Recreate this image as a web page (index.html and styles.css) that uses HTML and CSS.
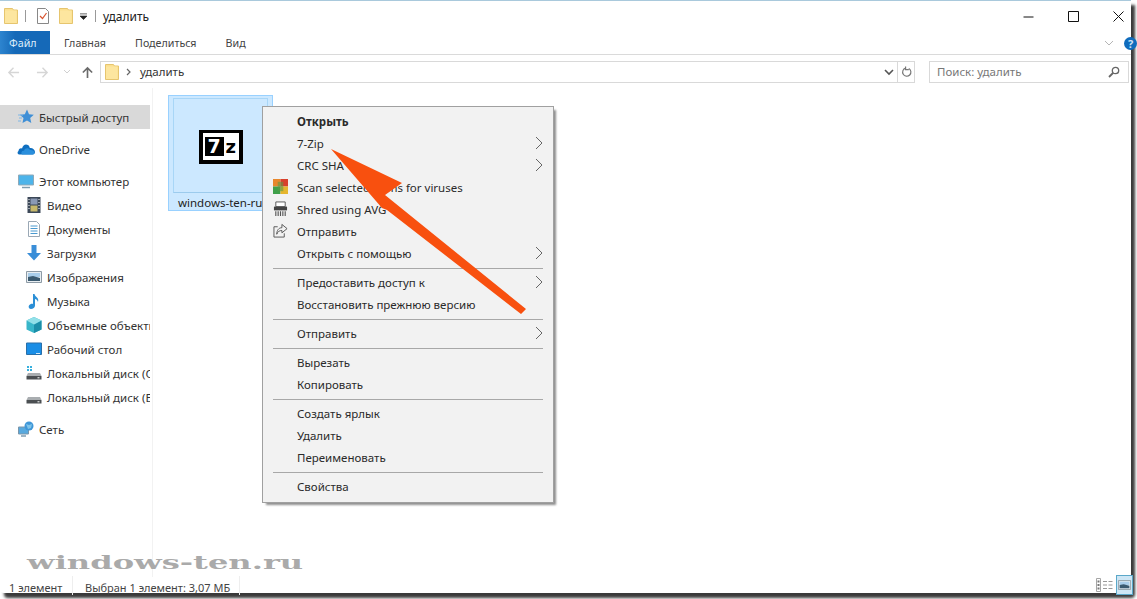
FILE: index.html
```html
<!DOCTYPE html>
<html lang="ru">
<head>
<meta charset="utf-8">
<title>удалить</title>
<link rel="stylesheet" href="styles.css">
</head>
<body>
<svg class="defs" width="0" height="0" aria-hidden="true">
  <symbol id="folder" viewBox="0 0 14 16">
    <path d="M0.5 0.5h8l1 1.500h4v13.500h-13z" fill="#fbdf8f" stroke="#e6c56e"/>
    <path d="M1 2.500h11.500v12.500H1z" fill="#fde69f"/>
  </symbol>
  <symbol id="chev" viewBox="0 0 8 14">
    <path d="M1 1l6 6-6 6" fill="none" stroke="#666" stroke-width="1"/>
  </symbol>
</svg>
<div class="window">
  <header class="titlebar">
    <svg class="ico-folder"><use href="#folder"/></svg>
    <i class="vsep"></i>
    <svg class="ico-check" viewBox="0 0 12 16"><path d="M.5.500h8l3 3v12H.5z" fill="#fff" stroke="#888"/><path d="M3 8l2.500 2.500L9.500 5" fill="none" stroke="#d9542f" stroke-width="1.200"/></svg>
    <svg class="ico-folder second"><use href="#folder"/></svg>
    <svg class="ico-drop" viewBox="0 0 8 8"><path d="M0 1h8M0 3.500h8L4 7.500z" stroke="#222" fill="#222" stroke-width=".8"/></svg>
    <i class="vsep"></i>
    <span class="title">удалить</span>
    <div class="winctl">
      <svg viewBox="0 0 11 11"><path d="M.5 6h10" stroke="#111" fill="none"/></svg>
      <svg viewBox="0 0 11 11"><path d="M.5.500h10v10H.5z" stroke="#111" fill="none"/></svg>
      <svg viewBox="0 0 11 11"><path d="M.5.500l10 10M10.500.500l-10 10" stroke="#111" fill="none"/></svg>
    </div>
  </header>
  <nav class="ribbon">
    <span class="tab-file">Файл</span>
    <span class="tab tab-home">Главная</span>
    <span class="tab tab-share">Поделиться</span>
    <span class="tab tab-view">Вид</span>
    <svg class="rib-chev" viewBox="0 0 10 6"><path d="M1 1l4 4 4-4" fill="none" stroke="#b5b5b5"/></svg>
    <span class="help">?</span>
  </nav>
  <div class="addrrow">
    <svg class="nav-ico" viewBox="0 0 14 14"><path d="M13 7H2M7 2L2 7l5 5" fill="none" stroke="#d6d6d6" stroke-width="1.500"/></svg>
    <svg class="nav-ico fwd" viewBox="0 0 14 14"><path d="M1 7h11M7 2l5 5-5 5" fill="none" stroke="#d6d6d6" stroke-width="1.500"/></svg>
    <svg class="nav-small" viewBox="0 0 8 6"><path d="M1 1l3 3 3-3" fill="none" stroke="#d0d0d0"/></svg>
    <svg class="nav-ico up" viewBox="0 0 14 14"><path d="M7 13V2M2 7l5-5 5 5" fill="none" stroke="#6b6b6b" stroke-width="1.800"/></svg>
    <div class="addr">
      <svg class="ico-folder addr-folder"><use href="#folder"/></svg>
      <svg class="addr-chev" viewBox="0 0 5 8"><path d="M1 1l3 3-3 3" fill="none" stroke="#666" stroke-width="1.200"/></svg>
      <span class="addr-text">удалить</span>
      <svg class="addr-drop" viewBox="0 0 10 7"><path d="M1 1l4 4 4-4" fill="none" stroke="#555" stroke-width="1.600"/></svg>
      <span class="addr-refresh">
        <svg viewBox="0 0 12 12"><path d="M8.500 2.200a4.500 4.500 0 1 1-3.500-.4M5 0v3.500h3.500" fill="none" stroke="#777" stroke-width="1.300"/></svg>
      </span>
    </div>
    <div class="search">
      <span>Поиск: удалить</span>
      <svg viewBox="0 0 12 12"><circle cx="7.500" cy="4.500" r="3.200" fill="none" stroke="#666" stroke-width="1.300"/><path d="M5 7l-4 4" stroke="#666" stroke-width="1.800"/></svg>
    </div>
  </div>
  <div class="main">
    <aside class="side">
      <div class="row l0 active">
        <svg viewBox="0 0 16 16"><path d="M9 .5l2 4.800 4.800.4-3.600 3.300 1.100 5L9 11.500l-4.500 2.500 1-5L1.800 5.700l5-.4z" fill="#3f8fd6"/><path d="M0 6h5M1 9h3M0 12h3" stroke="#7fb7e6"/></svg><span>Быстрый доступ</span>
      </div>
      <div class="row l0 gap">
        <svg class="cloud" viewBox="0 0 18 12"><path d="M2.500 11.500C.5 11.500 0 9 1.500 8c0-2 2-3.500 3.500-2.500C6 2 8.500.5 11 2c1 .6 1.500 1.500 1.800 3 2.500-.5 5.200 1.500 5.200 4 0 1.500-1 2.500-2.500 2.500z" fill="#0f6fc0"/><path d="M5 11.500c-1.500-2 0-4 2-3.800C8 5 11.500 4.500 13 7c2-.4 4.500.8 4.500 2.800 0 1-.6 1.700-1.500 1.700z" fill="#2a8fdc"/></svg><span>OneDrive</span>
      </div>
      <div class="row l0 gap">
        <svg viewBox="0 0 16 16"><path d="M.5 2h15v10H.5z" fill="#4db4ea" stroke="#8fa9b8"/><path d="M4 14.500h8" stroke="#7f9db0" stroke-width="1.500"/></svg><span>Этот компьютер</span>
      </div>
      <div class="row l1">
        <svg viewBox="0 0 16 16"><path d="M1.500 0h13v16h-13z" fill="#3c4858"/><path d="M4.500 1.500h7v6h-7z" fill="#8a99b5"/><path d="M4.500 8.500h7v6h-7z" fill="#c7b86b"/><path d="M2.500 2h1v1h-1zM2.500 5h1v1h-1zM2.500 8h1v1h-1zM2.500 11h1v1h-1zM12.500 2h1v1h-1zM12.500 5h1v1h-1zM12.500 8h1v1h-1zM12.500 11h1v1h-1z" fill="#fff"/></svg><span>Видео</span>
      </div>
      <div class="row l1">
        <svg viewBox="0 0 16 16"><path d="M2.500 .5h8l3 3v12h-11z" fill="#fff" stroke="#9aa8b5"/><path d="M4.500 5h7M4.500 7.500h7M4.500 10h7M4.500 12.500h7" stroke="#4a9ad0"/></svg><span>Документы</span>
      </div>
      <div class="row l1">
        <svg viewBox="0 0 16 16"><path d="M5.500 0h5v8H15l-7 7.500L1 8h4.500z" fill="#3a8ed8"/></svg><span>Загрузки</span>
      </div>
      <div class="row l1">
        <svg viewBox="0 0 16 16"><path d="M.5 2.500h15v11H.5z" fill="#e8eef2" stroke="#8d9aa5"/><path d="M2 4h12v4H2z" fill="#a9cdea"/><path d="M2 8l5-1 7 2v3H2z" fill="#3b5a70"/></svg><span>Изображения</span>
      </div>
      <div class="row l1">
        <svg viewBox="0 0 16 16"><path d="M7 1h1.500c.5 3 5 3.500 3.500 8-.5-2-2-3-3-3v6.500c0 2-2 3.500-4 3.500S2 14 3 12.500 6 10.500 7 11z" fill="#2b8fd6"/></svg><span>Музыка</span>
      </div>
      <div class="row l1">
        <svg viewBox="0 0 16 16"><path d="M8 0l7.500 3.500v9L8 16 .5 12.500v-9z" fill="#38b6c9"/><path d="M8 7.500L15.500 3.500v9L8 16z" fill="#1c8ea8"/><path d="M8 0l7.500 3.500L8 7.500.5 3.500z" fill="#92e0e8"/></svg><span>Объемные объекты</span>
      </div>
      <div class="row l1">
        <svg viewBox="0 0 16 16"><path d="M.5 2h15v11.500H.5z" fill="#1a8ee6" stroke="#2a6fa8"/><path d="M10 12.500h4" stroke="#d5e8f7"/></svg><span>Рабочий стол</span>
      </div>
      <div class="row l1">
        <svg viewBox="0 0 16 16"><path d="M1 1h2v2H1zM4 1h2v2H4zM1 4h2v2H1zM4 4h2v2H4z" fill="#38b0de"/><path d="M2 8h12l1.500 3H.5z" fill="#a9adb0"/><path d="M.5 11h15v3.500H.5z" fill="#4b4f52"/><path d="M11.500 12.300h2v1h-2z" fill="#fff"/></svg><span>Локальный диск (C:)</span>
      </div>
      <div class="row l1">
        <svg viewBox="0 0 16 16"><path d="M2 8h12l1.500 3H.5z" fill="#a9adb0"/><path d="M.5 11h15v3.500H.5z" fill="#4b4f52"/><path d="M11.500 12.300h2v1h-2z" fill="#fff"/></svg><span>Локальный диск (E:)</span>
      </div>
      <div class="row l0 gap">
        <svg viewBox="0 0 16 16"><path d="M.5 6h10v7H.5z" fill="#58a9de" stroke="#7b96aa"/><path d="M3 15h5" stroke="#7f9db0" stroke-width="1.500"/><circle cx="11" cy="5" r="4.500" fill="#3f97d8"/><path d="M8 3l3 1 3-1-1 4-3 1z" fill="#7fc4ea"/></svg><span>Сеть</span>
      </div>
    </aside>
    <section class="files">
      <div class="tile">
        <div class="thumb">
          <div class="sz"><b>7</b><em>z</em></div>
        </div>
        <div class="fname">windows-ten-ru</div>
      </div>
    </section>
  </div>
  <footer class="status">
    <span class="st1">1 элемент</span>
    <span class="st2">Выбран 1 элемент: 3,07 МБ</span>
    <div class="views">
      <svg viewBox="0 0 17 14"><path d="M.5.500h4v13h-4z" fill="none" stroke="#a5a5a5"/><path d="M1.500 2.500h2v2h-2zM1.500 6h2v2h-2zM1.500 9.500h2v2h-2z" fill="#777"/><path d="M7 3.500h4M12.500 3.500h4M7 7h4M12.500 7h4M7 10.500h4M12.500 10.500h4" stroke="#999"/></svg>
      <span class="view-on"><svg viewBox="0 0 16 12"><path d="M.5.500h15v11H.5z" fill="#dfe9ee" stroke="#8b989f"/><path d="M2 2h12v4H2z" fill="#a9cdea"/><path d="M2 6l5-1 7 2v3H2z" fill="#3b5a70"/></svg></span>
    </div>
  </footer>
</div>

<div class="menu">
  <div class="mi bold"><span>Открыть</span></div>
  <div class="mi"><span>7-Zip</span><svg class="arr"><use href="#chev"/></svg></div>
  <div class="mi"><span>CRC SHA</span><svg class="arr"><use href="#chev"/></svg></div>
  <div class="mi"><svg class="mico" viewBox="0 0 16 16"><path d="M0 0h8v8H0z" fill="#e8872c"/><path d="M8 0h8v8H8z" fill="#d8402c"/><path d="M0 8h8v8H0z" fill="#3fa04a"/><path d="M8 8h8v8H8z" fill="#e6b62e"/><path d="M5 3h6v10H5z" fill="#5b9a46" opacity=".6"/></svg><span>Scan selected items for viruses</span></div>
  <div class="mi"><svg class="mico" viewBox="0 0 16 16"><path d="M3 1h10v5H3z" fill="#fff" stroke="#555"/><path d="M1 6h14v4H1z" fill="#444"/><path d="M3 11v5M5.500 11v5M8 11v5M10.500 11v5M13 11v5" stroke="#555" stroke-width="1.200"/></svg><span>Shred using AVG</span></div>
  <div class="mi"><svg class="mico" viewBox="0 0 16 16"><path d="M5 4H1v11h11v-4" fill="none" stroke="#555"/><path d="M9.500 1.500L15 6l-5.500 4.500V8C7 8 5 9 4 12c0-4 2-7 5.500-7z" fill="none" stroke="#555"/></svg><span>Отправить</span></div>
  <div class="mi"><span>Открыть с помощью</span><svg class="arr"><use href="#chev"/></svg></div>
  <div class="msep"></div>
  <div class="mi"><span>Предоставить доступ к</span><svg class="arr"><use href="#chev"/></svg></div>
  <div class="mi"><span>Восстановить прежнюю версию</span></div>
  <div class="msep"></div>
  <div class="mi"><span>Отправить</span><svg class="arr"><use href="#chev"/></svg></div>
  <div class="msep"></div>
  <div class="mi"><span>Вырезать</span></div>
  <div class="mi"><span>Копировать</span></div>
  <div class="msep"></div>
  <div class="mi"><span>Создать ярлык</span></div>
  <div class="mi"><span>Удалить</span></div>
  <div class="mi"><span>Переименовать</span></div>
  <div class="msep"></div>
  <div class="mi"><span>Свойства</span></div>
</div>

<svg class="arrow" viewBox="0 0 1137 599"><path d="M331 149L402 183 385 195 526 309 521 314 387 210 382 208z" fill="#f8500f"/></svg>
<div class="watermark">windows-ten.ru</div>
</body>
</html>
```
FILE: styles.css
```css
* { box-sizing: border-box; }
html, body { margin: 0; height: 100%; }
body {
  width: 1137px;
  height: 599px;
  overflow: hidden;
  position: relative;
  background: #fff;
  font-family: "Noto Sans", "Open Sans", sans-serif;
  font-size: 11.5px;
  color: #333;
}
.defs { position: absolute; }
.window {
  width: 1131px;
  height: 593px;
  background: #fff;
  border-top: 1px solid #a9c9dc;
  border-radius: 0 0 4px 4px;
  box-shadow: 4px 5px 3px 0 #3a3a3a;
  display: flex;
  flex-direction: column;
}
.titlebar {
  height: 29px;
  display: flex;
  align-items: center;
  padding: 1px 0 0 4px;
  flex: none;
}
.ico-folder { width: 14px; height: 16px; flex: none; }
.ico-check { width: 12px; height: 16px; margin-left: 11px; }
.second { margin-left: 10px; }
.ico-drop { width: 7px; height: 7px; margin-left: 7px; }
.vsep { width: 1px; height: 12px; background: #999; margin-left: 7px; }
.ico-drop + .vsep { margin-left: 8px; }
.title { margin-left: 7px; font-size: 12px; color: #222; }
.winctl { margin-left: auto; display: flex; gap: 34px; padding-right: 7px; }
.winctl svg { width: 11px; height: 11px; }
.ribbon {
  height: 25px;
  padding-top: 2px;
  border-bottom: 1px solid #dadada;
  display: flex;
  align-items: center;
  flex: none;
  font-size: 10.7px;
  color: #444;
}
.tab-file {
  width: 50px;
  height: 23px;
  align-self: flex-end;
  background: linear-gradient(90deg, #2d84cf, #1569b8 30%);
  color: #dfeefa;
  padding-left: 9px;
  line-height: 24px;
  flex: none;
}
.tab-home { margin-left: 14px; }
.tab-share { margin-left: 29px; }
.tab-view { margin-left: 29px; }
.rib-chev { width: 10px; height: 6px; margin-left: auto; }
.help {
  width: 13px;
  height: 13px;
  margin-left: 10px;
  margin-right: -6px;
  border-radius: 50%;
  background: #0f6cbd;
  color: #cfe4f6;
  font-weight: 700;
  font-size: 11px;
  line-height: 13px;
  text-align: center;
  flex: none;
}
.addrrow {
  height: 33px;
  display: flex;
  align-items: center;
  padding: 1px 0 0 7px;
  flex: none;
}
.nav-ico { width: 13px; height: 13px; flex: none; margin-right: 16px; }
.nav-ico.fwd { margin-right: 14px; }
.nav-small { width: 8px; height: 6px; margin-right: 10px; flex: none; }
.nav-ico.up { margin-right: 6px; }
.addr {
  width: 815px;
  height: 22px;
  border: 1px solid #d9d9d9;
  display: flex;
  align-items: center;
  flex: none;
}
.addr-folder { margin-left: 4px; }
.addr-chev { width: 5px; height: 8px; margin-left: 7px; }
.addr-text { margin: 0 0 2px 9px; color: #333; }
.addr-drop { width: 10px; height: 7px; margin-left: auto; margin-right: 3px; }
.addr-refresh {
  width: 17px;
  height: 20px;
  border-left: 1px solid #d9d9d9;
  display: flex;
  align-items: center;
  justify-content: center;
}
.addr-refresh svg { width: 11px; height: 12px; }
.search {
  width: 200px;
  height: 22px;
  margin-left: 14px;
  border: 1px solid #d9d9d9;
  display: flex;
  align-items: center;
  justify-content: space-between;
  padding: 0 8px 0 7px;
  color: #777;
  flex: none;
}
.search span { margin-bottom: 2px; }
.search svg { width: 12px; height: 12px; }
.main { flex: 1; display: flex; min-height: 0; }
.side {
  width: 153px;
  padding-top: 17px;
  border-right: 1px solid #f2f2f2;
  flex: none;
  overflow: hidden;
}
.row {
  width: 150px;
  height: 24px;
  display: flex;
  align-items: center;
  white-space: nowrap;
  overflow: hidden;
}
.row svg { width: 16px; height: 16px; flex: none; }
.row svg.cloud { width: 18px; height: 12px; margin-left: -1px; margin-right: -1px; }
.row span { margin-left: 5px; }
.l0 { padding-left: 18px; }
.l1 { padding-left: 26px; }
.gap { margin-top: 8px; }
.active { background: #d9d9d9; }
.files { flex: 1; padding: 7px 15px; }
.tile {
  width: 105px;
  height: 116px;
  background: #cce8ff;
  border: 1px solid #99d1ff;
  padding: 2px 4px 0;
  overflow: hidden;
}
.thumb {
  height: 95px;
  border: 1px solid #a8d6f7;
  border-bottom-color: #9ccbed;
  display: flex;
  align-items: center;
  justify-content: center;
}
.sz {
  width: 44px;
  height: 34px;
  background: #fff;
  border: 4px solid #000;
  border-top-width: 3px;
  display: flex;
  align-items: center;
  gap: 2px;
  padding: 0 0 0 2px;
  margin-top: 2px;
  font-family: "DejaVu Sans", sans-serif;
  font-weight: 700;
}
.sz b {
  width: 19px;
  height: 19px;
  background: #000;
  color: #fff;
  font-size: 19px;
  line-height: 19px;
  text-align: center;
  flex: none;
}
.sz em { font-style: normal; font-size: 18px; line-height: 19px; color: #000; }
.fname { margin-top: 2px; margin-left: 5px; white-space: nowrap; font-size: 11.5px; color: #222; }
.status {
  height: 16px;
  flex: none;
  display: flex;
  align-items: center;
  font-size: 11px;
  color: #444;
}
.st1 { margin-left: 9px; width: 64px; border-right: 1px solid #eee; padding-top: 4px; }
.st2 { margin-left: 12px; padding-right: 9px; border-right: 1px solid #eee; padding-top: 4px; }
.views { margin-left: auto; display: flex; align-items: center; align-self: flex-end; margin-bottom: -2px; }
.views > svg { width: 17px; height: 14px; margin-right: 3px; }
.view-on {
  width: 17px;
  height: 20px;
  background: #cde6f5;
  border: 1px solid #5ba8c9;
  margin-right: -2px;
  display: flex;
  align-items: center;
  justify-content: center;
}
.view-on svg { width: 13px; height: 10px; }
.menu {
  position: absolute;
  left: 262px;
  top: 106px;
  width: 292px;
  height: 397px;
  background: #f2f2f2;
  border: 1px solid #a0a0a0;
  box-shadow: 3px 3px 2px -1px #8f8f8f;
  padding: 3px 2px 0;
  font-size: 11.5px;
  color: #2a2a2a;
}
.mi {
  height: 22px;
  display: flex;
  align-items: center;
  padding-left: 32px;
  position: relative;
  white-space: nowrap;
}
.bold { font-weight: 700; }
.mico { position: absolute; left: 8px; top: 3px; width: 15px; height: 15px; }
.arr { width: 8px; height: 14px; margin-left: auto; margin-right: 8px; }
.msep { height: 7px; padding-top: 4px; margin: 0 8px; }
.msep::before { content: ""; display: block; height: 1px; background: #a8a8a8; }
.arrow { position: absolute; left: 0; top: 0; width: 1137px; height: 599px; pointer-events: none; }
.watermark {
  position: absolute;
  left: 27px;
  top: 551px;
  font-family: "DejaVu Serif", serif;
  font-weight: 700;
  font-size: 19px;
  color: #aaa;
  white-space: nowrap;
  transform: scaleX(1.69);
  transform-origin: left center;
}
```
